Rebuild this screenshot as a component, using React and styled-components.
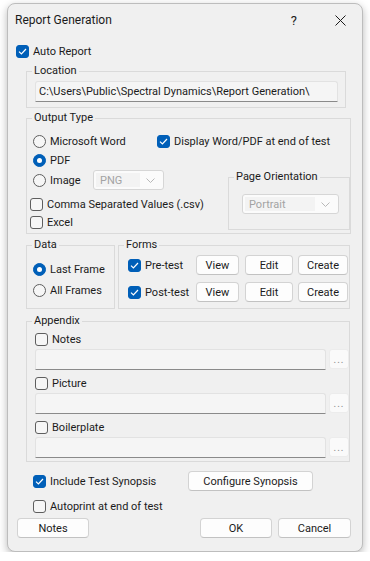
import styled, { createGlobalStyle } from "styled-components";

const GlobalStyle = createGlobalStyle`
    body {
        margin: 0;
        background: #ffffff;
        font-family: Roboto, "Noto Sans", sans-serif;
        font-size: 11px;
        color: #1b1b1b;
    }
`;

function Check({ checked, children, $ml = 0 }) {
    return (
        <Item $ml={$ml}>
            <Box $checked={checked}>
                {checked && (
                    <svg width="9" height="7" viewBox="0 0 9 7">
                        <path d="M1 3.6 L3.4 6 L8 1" fill="none" stroke="#fff" strokeWidth="1.2" />
                    </svg>
                )}
            </Box>
            {children}
        </Item>
    );
}

function Radio({ checked, children, $ml = 3, $w }) {
    return (
        <Item $ml={$ml} $w={$w}>
            <Circle $checked={checked}>{checked && <Dot />}</Circle>
            {children}
        </Item>
    );
}

function Combo({ value, $w, $ml = 0 }) {
    return (
        <ComboBox $w={$w} $ml={$ml}>
            <ComboText>{value}</ComboText>
            <svg width="9" height="5" viewBox="0 0 9 5">
                <path d="M0.5 0.5 L4.5 4.5 L8.5 0.5" fill="none" stroke="#b8b8b8" strokeWidth="1" />
            </svg>
        </ComboBox>
    );
}

function Group({ title, pl, pt, pb, pr = 0, children, ...rest }) {
    return (
        <GroupBox $pl={pl} $pt={pt} $pb={pb} $pr={pr} {...rest}>
            <legend>{title}</legend>
            {children}
        </GroupBox>
    );
}

function FileField({ label }) {
    return (
        <FileBlock>
            <Check>{label}</Check>
            <FileRow>
                <TextField />
                <DotsButton>...</DotsButton>
            </FileRow>
        </FileBlock>
    );
}

function App() {
    return (
        <>
            <GlobalStyle />
            <Dialog>
                <TitleBar>
                    <Title>Report Generation</Title>
                    <Help>?</Help>
                    <CloseIcon width="11" height="11" viewBox="0 0 11 11">
                        <path d="M0.5 0.5 L10.5 10.5 M10.5 0.5 L0.5 10.5" stroke="#1b1b1b" strokeWidth="1" />
                    </CloseIcon>
                </TitleBar>

                <Body>
                    <Check checked>Auto Report</Check>

                    <Group title="Location" pl={8} pt={2} pb={5} pr={7} $mt={3} $mr={5}>
                        <TextField>C:\Users\Public\Spectral Dynamics\Report Generation\</TextField>
                    </Group>

                    <Group title="Output Type" pl={3} pt={6} pb={2} $mt={2}>
                        <Row>
                            <Radio $w={124}>Microsoft Word</Radio>
                            <Check checked>Display Word/PDF at end of test</Check>
                        </Row>
                        <Lower>
                            <LeftCol>
                                <Radio checked>PDF</Radio>
                                <Row $h={20} $mt={1}>
                                    <Radio $w={60}>Image</Radio>
                                    <Combo value="PNG" $w={71} />
                                </Row>
                                <Row $mt={5}>
                                    <Check>Comma Separated Values (.csv)</Check>
                                </Row>
                                <Check>Excel</Check>
                            </LeftCol>
                            <Group title="Page Orientation" pl={13} pt={9} pb={15} pr={11} $w={122} $ml={0} $mb={1}>
                                <Combo value="Portrait" $w={97} />
                            </Group>
                        </Lower>
                    </Group>

                    <Split>
                        <Group title="Data" pl={6} pt={7} pb={9} $w={89} $ml={0}>
                            <Stack $gap={3}>
                                <Radio checked $ml={0}>Last Frame</Radio>
                                <Radio $ml={0}>All Frames</Radio>
                            </Stack>
                        </Group>
                        <Group title="Forms" pl={9} pt={2} pb={6} $ml={0} $grow>
                            <Stack $gap={7}>
                                {["Pre-test", "Post-test"].map((name) => (
                                    <FormRow key={name}>
                                        <Check checked>{name}</Check>
                                        <Button $w={43}>View</Button>
                                        <Button $w={48} $ml={6}>Edit</Button>
                                        <Button $w={50} $ml={5}>Create</Button>
                                    </FormRow>
                                ))}
                            </Stack>
                        </Group>
                    </Split>

                    <Group title="Appendix" pl={8} pt={1} pb={3} $mt={4} $mr={1}>
                        <Stack $gap={4}>
                            <FileField label="Notes" />
                            <FileField label="Picture" />
                            <FileField label="Boilerplate" />
                        </Stack>
                    </Group>

                    <Row $h={20} $mt={9}>
                        <Check checked $ml={17}>Include Test Synopsis</Check>
                        <Spacer />
                        <Button $w={125} $mr={38}>Configure Synopsis</Button>
                    </Row>
                    <Row $mt={6}>
                        <Check $ml={17}>Autoprint at end of test</Check>
                    </Row>
                    <Footer>
                        <Button $w={72} $ml={1}>Notes</Button>
                        <Spacer />
                        <Button $w={72}>OK</Button>
                        <Button $w={73} $ml={6}>Cancel</Button>
                    </Footer>
                </Body>
            </Dialog>
        </>
    );
}

const Dialog = styled.div`
    box-sizing: border-box;
    width: 356px;
    height: 549px;
    margin: 3px 0 0 7px;
    background: #f0f0f0;
    border: 1px solid #bdbdbd;
    border-radius: 8px;
    box-shadow: 0 3px 8px rgba(0, 0, 0, 0.28);
    display: flex;
    flex-direction: column;
`;

const TitleBar = styled.div`
    height: 32px;
    display: flex;
    align-items: center;
    padding-left: 7px;
`;

const Title = styled.span`
    flex: 1;
    font-size: 12px;
`;

const Help = styled.span`
    font-size: 13px;
    margin-right: 38px;
`;

const CloseIcon = styled.svg`
    margin-right: 16px;
`;

const Body = styled.div`
    display: flex;
    flex-direction: column;
    padding: 6px 11px 0 8px;
`;

const Item = styled.label`
    display: flex;
    align-items: center;
    gap: 4px;
    height: 18px;
    margin-left: ${({ $ml }) => $ml}px;
    width: ${({ $w }) => ($w ? `${$w}px` : "auto")};
    flex-shrink: 0;
    white-space: nowrap;
`;

const Box = styled.span`
    box-sizing: border-box;
    width: 13px;
    height: 13px;
    border-radius: 3px;
    display: flex;
    align-items: center;
    justify-content: center;
    background: ${({ $checked }) => ($checked ? "#005fb8" : "#f6f6f6")};
    border: 1px solid ${({ $checked }) => ($checked ? "#005fb8" : "#5e5e5e")};
`;

const Circle = styled.span`
    box-sizing: border-box;
    width: 13px;
    height: 13px;
    border-radius: 50%;
    display: flex;
    align-items: center;
    justify-content: center;
    background: ${({ $checked }) => ($checked ? "#005fb8" : "#f6f6f6")};
    border: 1px solid ${({ $checked }) => ($checked ? "#005fb8" : "#5e5e5e")};
`;

const Dot = styled.span`
    width: 5px;
    height: 5px;
    border-radius: 50%;
    background: #ffffff;
`;

const GroupBox = styled.fieldset`
    box-sizing: border-box;
    margin: ${({ $mt = 0 }) => $mt}px ${({ $mr = 0 }) => $mr}px ${({ $mb = 0 }) => $mb}px ${({ $ml = 10 }) => $ml}px;
    padding: ${({ $pt }) => $pt}px ${({ $pr }) => $pr}px ${({ $pb }) => $pb}px ${({ $pl }) => $pl}px;
    border: 1px solid #dadada;
    min-width: 0;
    width: ${({ $w }) => ($w ? `${$w}px` : "auto")};
    flex: ${({ $grow }) => ($grow ? 1 : "none")};
    align-self: ${({ $mb }) => ($mb !== undefined ? "flex-end" : "auto")};

    & > legend {
        padding: 0 2px;
        line-height: 16px;
        margin-left: ${({ $pl }) => 5 - $pl}px;
    }
`;

const Row = styled.div`
    display: flex;
    align-items: center;
    height: ${({ $h = 18 }) => $h}px;
    margin-top: ${({ $mt = 0 }) => $mt}px;
`;

const Lower = styled.div`
    display: flex;
    margin-top: 1px;
`;

const LeftCol = styled.div`
    width: 198px;
    display: flex;
    flex-direction: column;
`;

const Stack = styled.div`
    display: flex;
    flex-direction: column;
    gap: ${({ $gap }) => $gap}px;
`;

const Split = styled.div`
    display: flex;
    gap: 3px;
    margin: 3px 1px 0 10px;
`;

const FormRow = styled.div`
    display: flex;
    align-items: center;
    height: 20px;

    & > label {
        width: 68px;
    }
`;

const ComboBox = styled.div`
    box-sizing: border-box;
    width: ${({ $w }) => $w}px;
    height: 20px;
    margin-left: ${({ $ml }) => $ml}px;
    border: 1px solid #d6d6d6;
    border-radius: 3px;
    background: #fbfbfb;
    display: flex;
    align-items: center;
    padding: 2px 8px 2px 2px;
    gap: 6px;
`;

const ComboText = styled.span`
    flex: 1;
    height: 100%;
    display: flex;
    align-items: center;
    padding-left: 4px;
    background: #f3f3f3;
    color: #a3a3a3;
`;

const Button = styled.button`
    box-sizing: border-box;
    width: ${({ $w }) => $w}px;
    height: 20px;
    margin-left: ${({ $ml = 0 }) => $ml}px;
    margin-right: ${({ $mr = 0 }) => $mr}px;
    padding: 0;
    font: inherit;
    color: #1b1b1b;
    background: #fdfdfd;
    border: 1px solid #d3d3d3;
    border-bottom-color: #c2c2c2;
    border-radius: 4px;
    flex-shrink: 0;
`;

const FileBlock = styled.div`
    display: flex;
    flex-direction: column;
    gap: 1px;
`;

const FileRow = styled.div`
    display: flex;
    gap: 3px;
`;

const TextField = styled.div`
    box-sizing: border-box;
    flex: 1;
    height: 21px;
    display: flex;
    align-items: center;
    padding-left: 3px;
    background: #f5f5f5;
    border: 1px solid #e2e2e2;
    border-bottom-color: #8a8a8a;
    border-radius: 3px 3px 0 0;
    white-space: nowrap;
`;

const DotsButton = styled.div`
    box-sizing: border-box;
    width: 20px;
    height: 20px;
    display: flex;
    align-items: center;
    justify-content: center;
    background: #fafafa;
    border: 1px solid #ececec;
    border-radius: 3px;
    color: #8c8c8c;
    font-size: 10px;
    letter-spacing: 1px;
`;

const Footer = styled.div`
    display: flex;
    margin-top: 3px;
`;

const Spacer = styled.div`
    flex: 1;
`;

export default App;
